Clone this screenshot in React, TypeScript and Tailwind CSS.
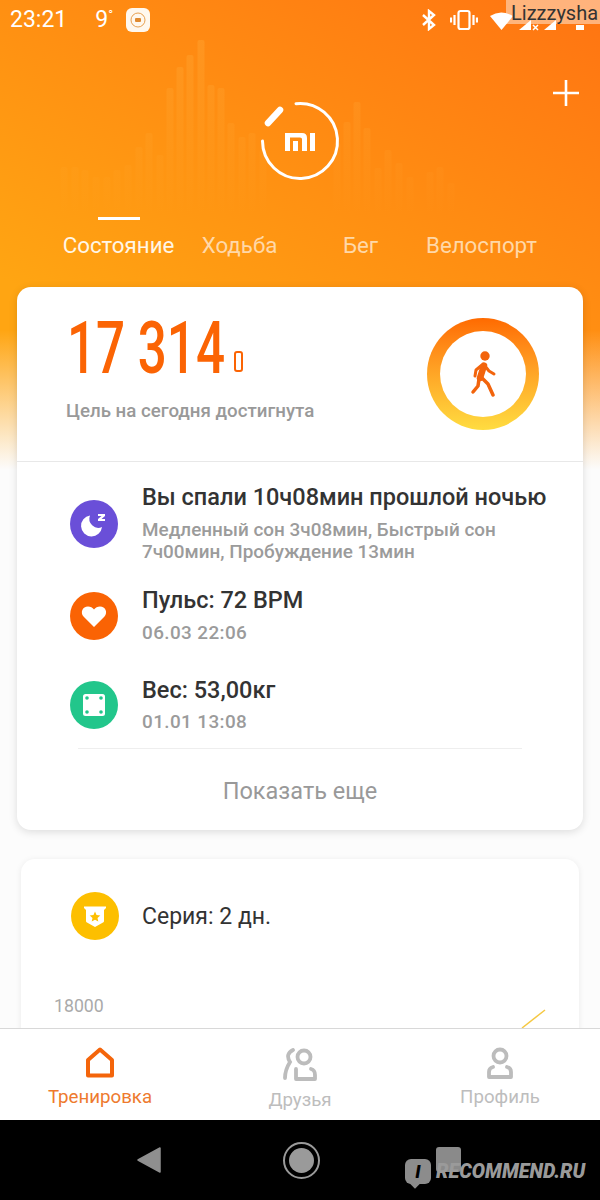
const WAVE: [number, number][] = [
  [64, 167], [75, 167], [85, 170], [96, 177], [107, 177], [117, 170], [128, 165], [139, 147], [149, 133], [160, 155],
  [170, 88], [180, 67], [190, 55], [201, 40], [211, 85], [221, 88], [231, 123], [242, 137], [252, 133], [263, 150],
  [337, 143], [347, 122], [357, 102], [367, 128], [378, 168], [388, 150], [399, 163], [410, 177], [430, 172], [440, 167], [451, 183],
]

function WaveBars() {
  return (
    <svg className="absolute left-0 top-0" width="600" height="240" viewBox="0 0 600 240">
      <defs>
        <linearGradient id="wave" gradientUnits="userSpaceOnUse" x1="0" y1="40" x2="0" y2="215">
          <stop offset="0" stopColor="#ffb040" stopOpacity="0.3" />
          <stop offset="1" stopColor="#ffb040" stopOpacity="0" />
        </linearGradient>
      </defs>
      {WAVE.map(([x, top]) => (
        <rect key={x} x={x - 3.5} y={top} width="7" height={215 - top} rx="2" fill="url(#wave)" />
      ))}
    </svg>
  )
}

function MiLogo() {
  return (
    <svg width="84" height="84" viewBox="0 0 84 84" fill="none">
      <path d="M38 4.700 A37.500 37.500 0 1 1 4.500 42" stroke="#fff" strokeWidth="3" strokeLinecap="round" />
      <path d="M10 24 L22 11" stroke="#fff" strokeWidth="6.500" strokeLinecap="round" />
      <path
        fillRule="evenodd"
        fill="#fff"
        d="M27 34 H44 Q49 34 49 39 V52 H44 V40 Q44 38.500 42 38.500 H32 V52 H27 Z M35 42 H40 V52 H35 Z M52 34 H57 V52 H52 Z"
      />
    </svg>
  )
}

function StatusIcons() {
  return (
    <div className="ml-auto flex items-center">
      <svg width="16" height="22" viewBox="0 0 16 22" fill="none" stroke="#fff" strokeWidth="2.400">
        <path d="M2 6 L13 16 L8 20 V2 L13 6 L2 16" />
      </svg>
      <svg className="ml-[13px]" width="28" height="22" viewBox="0 0 28 22" fill="none" stroke="#fff" strokeWidth="2.200">
        <rect x="8.500" y="2" width="11" height="18" rx="2" />
        <path d="M4.500 6 V16 M1 8.500 V13.500 M23.500 6 V16 M27 8.500 V13.500" />
      </svg>
      <svg className="ml-[12px]" width="110" height="30" viewBox="0 0 110 30" fill="#fff">
        <path d="M0 11 Q11 4 23 11 L11.500 25 Z" />
        <path d="M29 25 L41 15 V25 Z" />
        <path d="M43 20 L48 25 M48 20 L43 25" stroke="#fff" strokeWidth="1.500" />
        <path d="M54 25 L66 15 V25 Z" />
        <rect x="86" y="20" width="8" height="5" />
      </svg>
    </div>
  )
}

function WalkRing() {
  return (
    <div className="h-[112px] w-[112px] rounded-full bg-gradient-to-b from-[#ff6a00] to-[#ffdc40] p-[13px]">
      <div className="flex h-full w-full items-center justify-center rounded-full bg-white">
        <svg width="27" height="46" viewBox="0 0 27 46" fill="none" stroke="#f2640c" strokeLinecap="round" strokeLinejoin="round">
          <circle cx="15" cy="5" r="4.700" fill="#f2640c" stroke="none" />
          <path d="M14 14.500 L10 27" strokeWidth="6.500" />
          <path d="M15 15 L19 20 L24 23" strokeWidth="3" />
          <path d="M12 14 L6 19 L5 25" strokeWidth="3" />
          <path d="M11 26 L18 33 L23 44" strokeWidth="3.500" />
          <path d="M9 28 L8 35 L3 41" strokeWidth="3.500" />
        </svg>
      </div>
    </div>
  )
}

function MoonIcon() {
  return (
    <svg width="48" height="48" viewBox="0 0 48 48">
      <circle cx="24" cy="24" r="24" fill="#6a4fd8" />
      <path d="M20 15.500 A10.500 10.500 0 1 0 32 27 A9 9 0 0 1 20 15.500 Z" fill="#fff" />
      <path d="M28 14 H35 V16 L31.500 19 H35 V21 H28 V19 L31.500 16 H28 Z" fill="#fff" />
    </svg>
  )
}

function HeartIcon() {
  return (
    <svg width="48" height="48" viewBox="0 0 48 48">
      <circle cx="24" cy="24" r="24" fill="#fa6304" />
      <path d="M24 35 L13.500 24.500 C10 20.500 12.500 14.500 18 14.500 C20.500 14.500 22.500 15.500 24 17.500 C25.500 15.500 27.500 14.500 30 14.500 C35.500 14.500 38 20.500 34.500 24.500 Z" fill="#fff" />
    </svg>
  )
}

function ScaleIcon() {
  return (
    <svg width="48" height="48" viewBox="0 0 48 48">
      <circle cx="24" cy="24" r="24" fill="#22c68b" />
      <rect x="13" y="13" width="22" height="22" rx="2.500" fill="#fff" />
      <circle cx="17" cy="17" r="1.800" fill="#22c68b" />
      <circle cx="31" cy="17" r="1.800" fill="#22c68b" />
      <circle cx="17" cy="31" r="1.800" fill="#22c68b" />
      <circle cx="31" cy="31" r="1.800" fill="#22c68b" />
    </svg>
  )
}

function BadgeIcon() {
  return (
    <svg width="48" height="48" viewBox="0 0 48 48">
      <circle cx="24" cy="24" r="24" fill="#fdbf00" />
      <path d="M13 14.500 H35 V16 L33 18 V29 Q33 30 32 30.500 L24 35 L16 30.500 Q15 30 15 29 V18 L13 16 Z" fill="#fff" />
      <path d="M24 19.500 L25.500 23 L29.300 23.400 L26.500 25.900 L27.300 29.600 L24 27.700 L20.700 29.600 L21.500 25.900 L18.700 23.400 L22.500 23 Z" fill="#fdbf00" />
    </svg>
  )
}

const ROW_TITLE = 'whitespace-nowrap text-[23.5px] leading-[26px] font-medium text-[#333]'
const ROW_SUB = 'text-[18.900px] leading-[22px] font-medium text-[#9b9b9b]'

export default function App() {
  return (
    <div className="flex h-[1200px] w-[600px] flex-col overflow-hidden bg-[#fafafa] font-['Roboto',sans-serif]">
      <main className="relative h-[1028px] shrink-0 overflow-hidden bg-[linear-gradient(to_bottom,transparent_330px,#fcfcfc_470px),linear-gradient(210deg,#ff7412,#ffa512_540px)]">
        <WaveBars />

        <div className="relative flex h-[40px] items-center pl-[10px] text-white">
          <span className="text-[23px]">23:21</span>
          <span className="ml-[28px] text-[23px]">9</span>
          <span className="mb-[10px] text-[13px]">°</span>
          <div className="ml-[13px] flex h-[24px] w-[24px] items-center justify-center rounded-[6px] bg-[#fff8ee]">
            <svg width="18" height="18" viewBox="0 0 18 18" fill="none">
              <circle cx="9" cy="9" r="7" stroke="#e8a050" strokeWidth="1" />
              <rect x="6" y="7" width="6" height="4" rx="1" fill="#e08a30" />
            </svg>
          </div>
          <StatusIcons />
        </div>

        {/* user name stamped on top of the status bar */}
        <div className="absolute right-0 top-0 h-[24px] w-[94px] bg-white/45 pl-[5px] text-[20px] leading-[27px] text-[#333]">
          Lizzzysha
        </div>

        <svg className="absolute left-[552px] top-[79px]" width="28" height="28" viewBox="0 0 28 28" stroke="#fff" strokeWidth="2.600">
          <path d="M1 14 H27 M14 1 V27" />
        </svg>

        <div className="relative mt-[59px] flex justify-center">
          <MiLogo />
        </div>

        <div className="relative mx-[58px] mt-[34px] grid grid-cols-4 text-center text-[22.300px] leading-[26px] text-[#ffd8a8]">
          <div className="flex flex-col items-center whitespace-nowrap text-[#fff6e6]">
            <div className="h-[3px] w-[42px] bg-white" />
            <span className="mt-[12px]">Состояние</span>
          </div>
          <span className="mt-[15px] whitespace-nowrap">Ходьба</span>
          <span className="mt-[15px] whitespace-nowrap">Бег</span>
          <span className="mt-[15px] whitespace-nowrap">Велоспорт</span>
        </div>

        <section className="relative mx-[17px] mt-[29px] rounded-[14px] bg-white shadow-[0_2px_8px_rgba(0,0,0,0.13)]">
          <div className="flex h-[175px] items-start justify-between border-b border-[#e8e8e8] pl-[49px] pr-[44px] pt-[31px]">
            <div>
              <div className="-mt-[5px] ml-[1px] flex h-[72px] items-center">
                <span className="origin-left scale-x-[0.71] whitespace-nowrap text-[72px] leading-[72px] font-medium text-[#fb6404]">
                  17 314
                </span>
                <div className="-ml-[56px] mt-[25px] h-[21px] w-[9px] rounded-[3px] border-[2.500px] border-[#fb6404]" />
              </div>
              <p className="mt-[14px] whitespace-nowrap text-[18.700px] leading-[24px] font-medium text-[#999]">
                Цель на сегодня достигнута
              </p>
            </div>
            <WalkRing />
          </div>

          <div className="pt-[22px]">
            <div className="flex items-center gap-[24px] pl-[53px]">
              <MoonIcon />
              <div>
                <h3 className={ROW_TITLE}>Вы спали 10ч08мин прошлой ночью</h3>
                <p className={`mt-[9px] w-[390px] ${ROW_SUB}`}>Медленный сон 3ч08мин, Быстрый сон 7ч00мин, Пробуждение 13мин</p>
              </div>
            </div>
            <div className="mt-[24px] flex items-center gap-[24px] pl-[53px]">
              <HeartIcon />
              <div>
                <h3 className={ROW_TITLE}>Пульс: 72 BPM</h3>
                <p className={`mt-[9px] tracking-[0.4px] ${ROW_SUB}`}>06.03 22:06</p>
              </div>
            </div>
            <div className="mt-[33px] flex items-center gap-[24px] pl-[53px]">
              <ScaleIcon />
              <div>
                <h3 className={ROW_TITLE}>Вес: 53,00кг</h3>
                <p className={`mt-[8px] tracking-[0.4px] ${ROW_SUB}`}>01.01 13:08</p>
              </div>
            </div>
          </div>

          <div className="mx-[61px] mt-[15px] h-px bg-[#eee]" />
          <div className="flex h-[81px] items-center justify-center pt-[4px] text-[23.5px] text-[#999]">Показать еще</div>
        </section>

        <section className="relative mx-[21px] mt-[29px] h-[300px] rounded-[14px] bg-white shadow-[0_1px_6px_rgba(0,0,0,0.08)]">
          <div className="flex items-center gap-[23px] pl-[50px] pt-[33px]">
            <BadgeIcon />
            <span className="mt-[3px] text-[23px] text-[#333]">Серия: 2 дн.</span>
          </div>
          <p className="ml-[33px] mt-[56px] text-[17.700px] leading-[20px] text-[#aaa]">18000</p>
          <svg className="absolute left-[495px] top-[147px]" width="34" height="26" viewBox="0 0 34 26" fill="none">
            <path d="M29 4 L6 22" stroke="#f5c842" strokeWidth="1.500" />
          </svg>
        </section>
      </main>

      <nav className="grid h-[92px] shrink-0 grid-cols-3 border-t border-[#d8d8d8] bg-white text-[18.700px] leading-[22px]">
        <div className="flex flex-col items-center pt-[18px] text-[#ee7a2e]">
          <svg width="30" height="31" viewBox="0 0 30 31" fill="none" stroke="#f4650b" strokeWidth="4" strokeLinejoin="round">
            <path d="M15 2.500 L27 13 V28.500 H3 V13 Z" />
          </svg>
          <span className="mt-[8px]">Тренировка</span>
        </div>
        <div className="flex flex-col items-center pt-[19px] text-[#bdbdbd]">
          <svg width="34" height="33" viewBox="0 0 34 33" fill="none" stroke="#bcbcbc" strokeWidth="3.800" strokeLinecap="round">
            <circle cx="21" cy="9" r="6.500" />
            <path d="M13 21 V31 H32 V27 Q32 22 28 21" strokeLinejoin="round" />
            <path d="M10 2 Q2 6 7 14 Q2 22 2 30" />
          </svg>
          <span className="mt-[8px]">Друзья</span>
        </div>
        <div className="flex flex-col items-center pt-[18px] text-[#bdbdbd]">
          <svg width="26" height="32" viewBox="0 0 26 32" fill="none" stroke="#bcbcbc" strokeWidth="3.800" strokeLinecap="round">
            <circle cx="13" cy="9" r="6.500" />
            <path d="M6 20 Q2 21 2 25 V30 H24 V25 Q24 21 20 20" strokeLinejoin="round" />
          </svg>
          <span className="mt-[7px]">Профиль</span>
        </div>
      </nav>

      <footer className="relative flex h-[80px] shrink-0 items-center justify-center bg-black">
        <div className="flex items-center">
          <svg width="24" height="26" viewBox="0 0 24 26" fill="#8f8f8f">
            <path d="M23 1 V25 L1 13 Z" stroke="#8f8f8f" strokeWidth="1.500" strokeLinejoin="round" />
          </svg>
          <div className="ml-[122px] flex h-[37px] w-[37px] items-center justify-center rounded-full border-2 border-[#9a9a9a]">
            <div className="h-[25px] w-[25px] rounded-full bg-[#9a9a9a]" />
          </div>
          <div className="ml-[116px] mr-[3px] mb-[1px] h-[25px] w-[25px] rounded-[3px] bg-[#8a8a8a]" />
        </div>

        {/* site stamp over the nav buttons */}
        <div className="absolute left-[405px] top-[39px] flex items-start gap-[5px]">
          <div className="relative flex h-[25px] w-[26px] items-center justify-center rounded-[6px] bg-[#8c8c8c] text-[18px] font-black italic leading-none text-black">
            <span className="relative">I</span>
            <div className="absolute -bottom-[3px] left-[6px] -z-0 h-[8px] w-[8px] rotate-45 bg-[#8c8c8c]" />
          </div>
          <span className="mt-[2px] text-[19.800px] leading-[22px] font-black italic text-[#9a9a9a]">RECOMMEND.RU</span>
        </div>
      </footer>
    </div>
  )
}
